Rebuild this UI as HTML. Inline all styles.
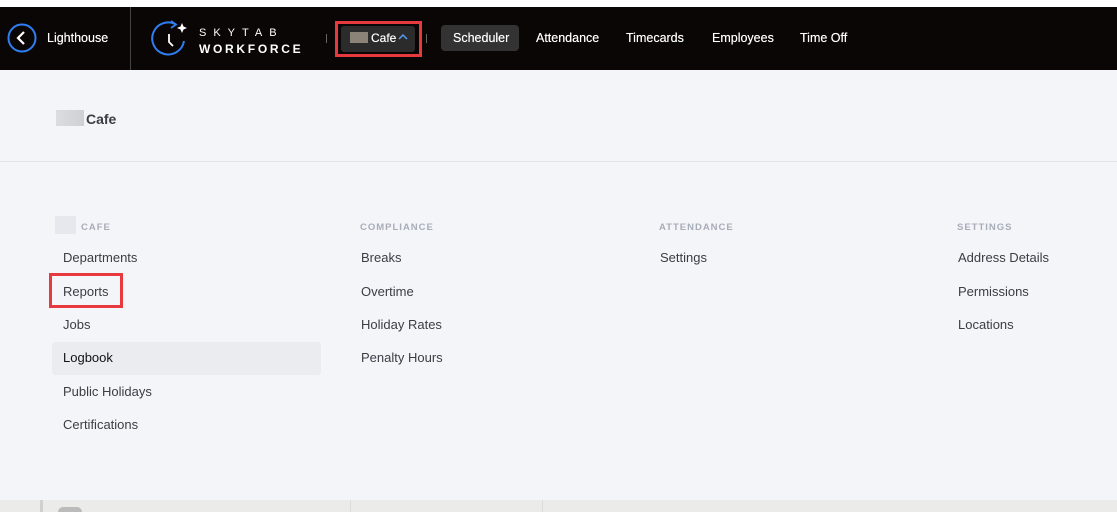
<!DOCTYPE html>
<html><head><style>
html,body{margin:0;width:1117px;height:512px;overflow:hidden}
body{background:#f4f5f9;font-family:"Liberation Sans",sans-serif;position:relative}
.a{position:absolute;white-space:nowrap}
.nav{position:absolute;left:0;top:7px;width:1117px;height:63px;background:#0b0606}
.nt{color:#fff;font-size:12.5px;text-shadow:0 0 0.4px #fff}
.h{color:#a7adb8;font-size:9.5px;font-weight:bold;letter-spacing:1px}
.i{color:#3a3d44;font-size:13px}
</style></head><body>
<div class="a" style="left:0;top:0;width:1117px;height:7px;background:#fff"></div>
<div class="nav"></div>
<svg class="a" style="left:7px;top:23px" width="30" height="30"><circle cx="15" cy="15" r="13.5" fill="none" stroke="#2f7ff0" stroke-width="2"/><path d="M17 9l-6 6 6 6" fill="none" stroke="#fff" stroke-width="2.2"/></svg>
<div class="a nt" style="left:47px;top:31px">Lighthouse</div>
<div class="a" style="left:130px;top:7px;width:1px;height:63px;background:#444"></div>
<svg class="a" style="left:150px;top:18px" width="42" height="42"><path d="M26 6.5A16 16 0 1 0 34 23" fill="none" stroke="#2f7ff0" stroke-width="2"/><path d="M21 3l5 3.5-5 3.5" fill="none" stroke="#2f7ff0" stroke-width="1.8"/><path d="M19 16v8l4 4" fill="none" stroke="#fff" stroke-width="1.8"/><path d="M32 5l1.5 3.5 3.5 1.5-3.5 1.5L32 15l-1.5-3.5L27 10l3.5-1.5z" fill="#fff"/></svg>
<div class="a" style="left:199px;top:27px;color:#fff;font-size:11px;letter-spacing:7px">SKYTAB</div>
<div class="a" style="left:199px;top:42px;color:#fff;font-size:12px;font-weight:bold;letter-spacing:2.7px">WORKFORCE</div>
<div class="a" style="left:326px;top:34px;width:1px;height:9px;background:#666"></div>
<div class="a" style="left:335px;top:21px;width:87px;height:36px;border:3px solid #e8393f;box-sizing:border-box"></div>
<div class="a" style="left:341px;top:26px;width:74px;height:26px;background:#2b2b2b;border-radius:3px"></div>
<div class="a" style="left:350px;top:32px;width:18px;height:11px;background:#8b8378"></div>
<div class="a nt" style="left:371px;top:31px;font-size:12px">Cafe</div>
<svg class="a" style="left:398px;top:33px" width="10" height="8"><path d="M1 6l4-4 4 4" fill="none" stroke="#5a9cf5" stroke-width="1.5"/></svg>
<div class="a" style="left:426px;top:34px;width:1px;height:9px;background:#666"></div>
<div class="a" style="left:441px;top:25px;width:78px;height:26px;background:#333;border-radius:4px"></div>
<div class="a nt" style="left:453px;top:31px">Scheduler</div>
<div class="a nt" style="left:536px;top:31px">Attendance</div>
<div class="a nt" style="left:626px;top:31px">Timecards</div>
<div class="a nt" style="left:712px;top:31px">Employees</div>
<div class="a nt" style="left:800px;top:31px">Time Off</div>
<div class="a" style="left:56px;top:110px;width:28px;height:16px;background:linear-gradient(90deg,#dcdde1,#cfd0d4)"></div>
<div class="a" style="left:86px;top:111px;font-size:14px;font-weight:bold;color:#3a3d44">Cafe</div>
<div class="a" style="left:0;top:161px;width:1117px;height:1px;background:#e2e4e9"></div>
<div class="a" style="left:55px;top:216px;width:21px;height:18px;background:#e6e8ee"></div>
<div class="a h" style="left:81px;top:222px">CAFE</div>
<div class="a h" style="left:360px;top:222px">COMPLIANCE</div>
<div class="a h" style="left:659px;top:222px">ATTENDANCE</div>
<div class="a h" style="left:957px;top:222px">SETTINGS</div>
<div class="a" style="left:52px;top:342px;width:269px;height:33px;background:#eaecf0;border-radius:3px"></div>
<div class="a" style="left:49px;top:273px;width:74px;height:35px;border:3px solid #e8393f;box-sizing:border-box"></div>
<div class="a i" style="left:63px;top:250px">Departments</div>
<div class="a i" style="left:63px;top:284px">Reports</div>
<div class="a i" style="left:63px;top:317px">Jobs</div>
<div class="a i" style="left:63px;top:350px;color:#111">Logbook</div>
<div class="a i" style="left:63px;top:384px">Public Holidays</div>
<div class="a i" style="left:63px;top:417px">Certifications</div>
<div class="a i" style="left:361px;top:250px">Breaks</div>
<div class="a i" style="left:361px;top:284px">Overtime</div>
<div class="a i" style="left:361px;top:317px">Holiday Rates</div>
<div class="a i" style="left:361px;top:350px">Penalty Hours</div>
<div class="a i" style="left:660px;top:250px">Settings</div>
<div class="a i" style="left:958px;top:250px">Address Details</div>
<div class="a i" style="left:958px;top:284px">Permissions</div>
<div class="a i" style="left:958px;top:317px">Locations</div>
<div class="a" style="left:0;top:500px;width:1117px;height:12px;background:#ebebea"></div>
<div class="a" style="left:40px;top:500px;width:3px;height:12px;background:#d0d0d0"></div>
<div class="a" style="left:350px;top:500px;width:1px;height:12px;background:#ddd"></div>
<div class="a" style="left:542px;top:500px;width:1px;height:12px;background:#ddd"></div>
<div class="a" style="left:58px;top:507px;width:24px;height:5px;border-radius:12px 12px 0 0;background:#bbb"></div>
</body></html>
